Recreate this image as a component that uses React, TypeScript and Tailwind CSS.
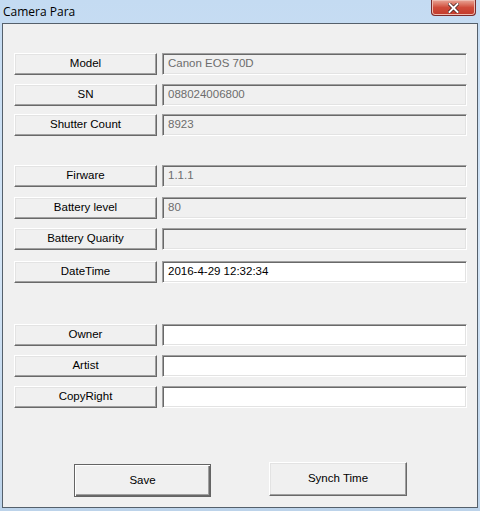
import React from 'react';

type Row = { label: string; value: string; editable?: boolean; mt: string };

const rows: Row[] = [
  { label: 'Model', value: 'Canon EOS 70D', mt: 'mt-[29px]' },
  { label: 'SN', value: '088024006800', mt: 'mt-[9px]' },
  { label: 'Shutter Count', value: '8923', mt: 'mt-[8px]' },
  { label: 'Firware', value: '1.1.1', mt: 'mt-[29px]' },
  { label: 'Battery level', value: '80', mt: 'mt-[10px]' },
  { label: 'Battery Quarity', value: '', mt: 'mt-[9px]' },
  { label: 'DateTime', value: '2016-4-29 12:32:34', editable: true, mt: 'mt-[11px]' },
  { label: 'Owner', value: '', editable: true, mt: 'mt-[41px]' },
  { label: 'Artist', value: '', editable: true, mt: 'mt-[9px]' },
  { label: 'CopyRight', value: '', editable: true, mt: 'mt-[9px]' },
];

function LabelButton({ children }: { children: React.ReactNode }) {
  return (
    <div className="w-[143px] h-[22px] shrink-0 flex items-center justify-center bg-[#f0f0f0] border-t border-l border-t-[#ffffff] border-l-[#ffffff] border-b border-r border-b-[#696969] border-r-[#696969] shadow-[inset_-1px_-1px_0_#a0a0a0,inset_1px_1px_0_#e3e3e3] text-[11.5px] text-black">
      {children}
    </div>
  );
}

function Field({ value, editable }: { value: string; editable?: boolean }) {
  return (
    <div
      className={`w-[305px] h-[22px] flex items-center pl-[5px] border-t border-l border-t-[#a0a0a0] border-l-[#a0a0a0] border-b border-r border-b-[#ffffff] border-r-[#ffffff] shadow-[inset_1px_1px_0_#696969,inset_-1px_-1px_0_#e3e3e3] text-[11.5px] ${
        editable ? 'bg-white text-black' : 'bg-[#f0f0f0] text-[#6d6d6d]'
      }`}
    >
      {value}
    </div>
  );
}

export default function App() {
  return (
    <div
      className="w-[480px] h-[511px] flex flex-col overflow-hidden bg-gradient-to-b from-[#c4dbf2] via-[#d4e5f6] to-[#bcd3ea]"
      style={{ fontFamily: '"Liberation Sans", Arial, sans-serif' }}
    >
      {/* TITLE BAR */}
      <div className="h-[23px] shrink-0 flex items-start justify-between">
        <span className="pl-[3px] pt-[3px] text-[12px] text-black" style={{ fontFamily: '"Open Sans", "Liberation Sans", sans-serif' }}>
          Camera Para
        </span>
        <div className="mr-[4px] w-[45px] h-[16px] rounded-b-[4px] border border-t-0 border-[#7a2a2a] bg-gradient-to-b from-[#e8a597] via-[#cf4b3a] to-[#c23a2b] flex items-center justify-center shadow-[inset_0_0_0_1px_#eebbb0]">
          <svg width="11" height="10" viewBox="0 0 11 10">
            <path d="M1.5 1 L9.5 9 M9.5 1 L1.5 9" stroke="#3b1a1a" strokeWidth="3.4" strokeLinecap="square" />
            <path d="M1.5 1 L9.5 9 M9.5 1 L1.5 9" stroke="#ffffff" strokeWidth="2" strokeLinecap="square" />
          </svg>
        </div>
      </div>

      {/* CLIENT */}
      <div className="flex-1 px-[2px] pb-[3px] flex">
        <div className="flex-1 bg-[#f0f0f0] border border-[#55606b] flex flex-col pl-[11px]">
          {rows.map(r => (
            <div key={r.label} className={`flex gap-[5px] ${r.mt}`}>
              <LabelButton>{r.label}</LabelButton>
              <Field value={r.value} editable={r.editable} />
            </div>
          ))}

          <div className="flex items-start mt-[54px] pl-[60px] gap-[58px]">
            <div className="mt-[2px] w-[137px] h-[33px] flex items-center justify-center border border-[#646464] bg-[#f0f0f0] shadow-[inset_1px_1px_0_#ffffff,inset_-1px_-1px_0_#696969,inset_-2px_-2px_0_#a0a0a0] text-[11.5px] text-black">
              Save
            </div>
            <div className="w-[138px] h-[34px] flex items-center justify-center bg-[#f0f0f0] border-t border-l border-t-[#ffffff] border-l-[#ffffff] border-b border-r border-b-[#696969] border-r-[#696969] shadow-[inset_-1px_-1px_0_#a0a0a0,inset_1px_1px_0_#e3e3e3] text-[11.5px] text-black">
              Synch Time
            </div>
          </div>
        </div>
      </div>
    </div>
  );
}
